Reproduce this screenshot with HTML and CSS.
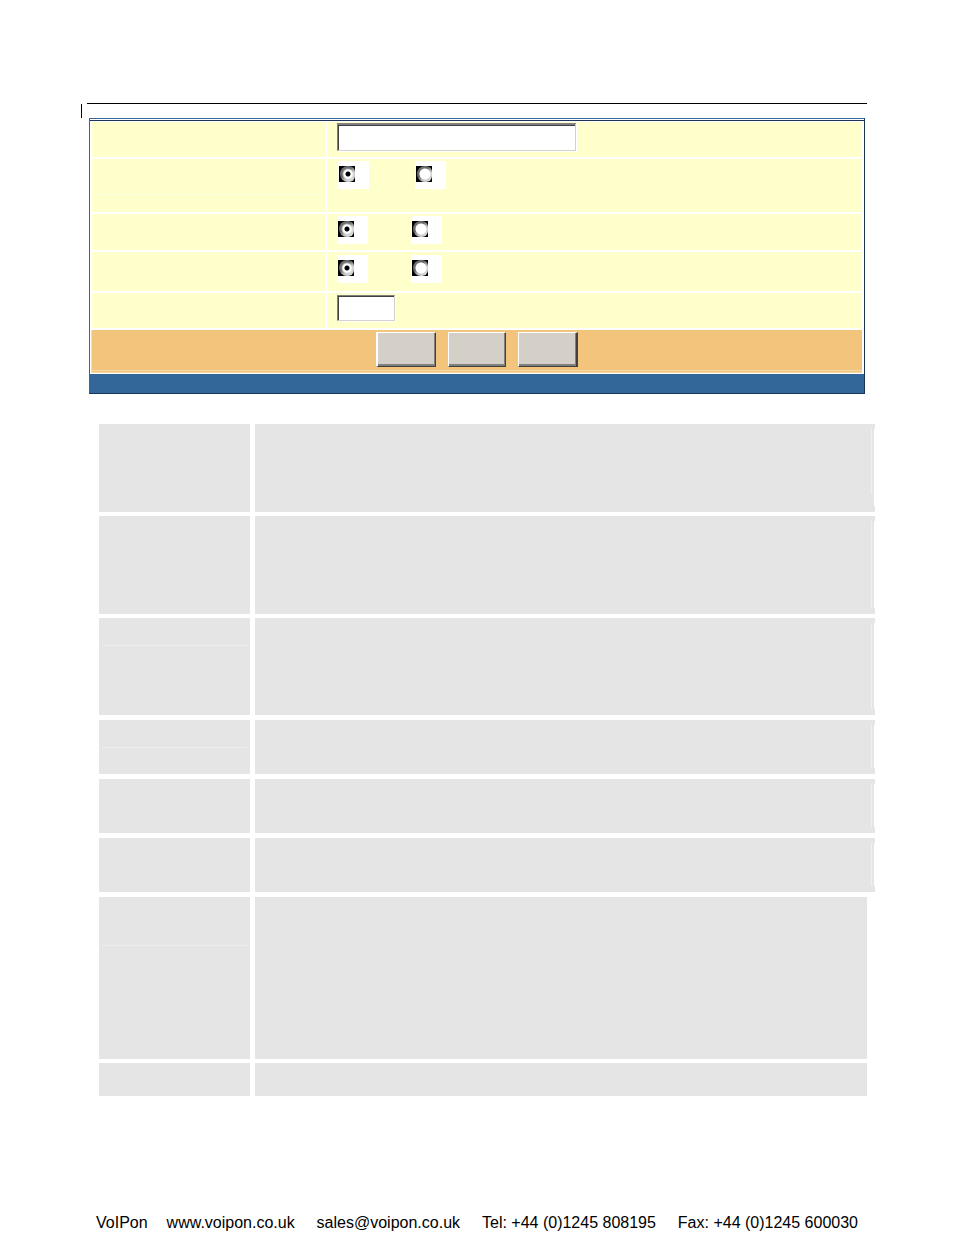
FILE: index.html
```html
<!DOCTYPE html>
<html lang="en">
<head>
<meta charset="utf-8">
<title>VoIPon</title>
<link rel="stylesheet" href="styles.css">
</head>
<body>
<header class="page-head"><div class="change-bar"></div></header>
<main>
<form class="panel">
  <div class="rows">
    <div class="row row-first"><div class="name"></div><div class="field"><input class="text" type="text" aria-label="Value"></div></div>
    <div class="row row-tall"><div class="name name-lined"></div><div class="field field-wide">
      <label class="choice"><input type="radio" name="a" aria-label="First option" checked></label>
      <label class="choice"><input type="radio" name="a" aria-label="Second option"></label></div></div>
    <div class="row row-mid"><div class="name"></div><div class="field">
      <label class="choice"><input type="radio" name="b" aria-label="First option" checked></label>
      <label class="choice"><input type="radio" name="b" aria-label="Second option"></label></div></div>
    <div class="row row-low"><div class="name"></div><div class="field">
      <label class="choice"><input type="radio" name="c" aria-label="First option" checked></label>
      <label class="choice"><input type="radio" name="c" aria-label="Second option"></label></div></div>
    <div class="row row-last"><div class="name"></div><div class="field"><input class="text text-small" type="text" aria-label="Number"></div></div>
  </div>
  <div class="actions">
    <button class="btn btn-first" type="button" aria-label="Update"></button>
    <button class="btn" type="button" aria-label="Cancel"></button>
    <button class="btn btn-final" type="button" aria-label="Reboot"></button>
  </div>
  <div class="panel-foot"></div>
</form>
<table class="info">
  <tr class="h-92"><td class="term"></td><td class="text-cell text-cell-short"></td></tr>
  <tr class="h-102"><td class="term"></td><td class="text-cell"></td></tr>
  <tr class="h-102 gap-5"><td class="term lined"></td><td class="text-cell"></td></tr>
  <tr class="h-59 gap-5"><td class="term lined"></td><td class="text-cell"></td></tr>
  <tr class="h-59 gap-5"><td class="term"></td><td class="text-cell"></td></tr>
  <tr class="h-59 gap-5"><td class="term"></td><td class="text-cell"></td></tr>
</table>
<table class="info info-narrow">
  <tr class="h-166"><td class="term lined lined-low"></td><td></td></tr>
  <tr class="h-37"><td class="term"></td><td></td></tr>
</table>
</main>
<footer class="page-foot">
  <div class="brand"><span>VoIPon</span><a href="#">www.voipon.co.uk</a></div>
  <a href="#">sales@voipon.co.uk</a>
  <span>Tel: +44 (0)1245 808195</span>
  <span>Fax: +44 (0)1245 600030</span>
</footer>
</body>
</html>
```
FILE: styles.css
```css
* { box-sizing: border-box; }
body {
  margin: 0;
  background: #fff;
  color: #000;
  font: 16px/18px "Liberation Sans", Arial, sans-serif;
}
.page-head {
  margin: 0 87px 0 81px;
  padding-top: 103px;
}
.page-head::before {
  content: "";
  display: block;
  height: 1px;
  margin-left: 6px;
  background: #000;
}
.change-bar { width: 1px; height: 14px; background: #000; }

.panel {
  margin: 0 89px;
  border: 1px solid #336699;
  border-right-color: #1a3557;
  border-bottom-color: #1a3557;
}
.rows {
  margin-top: 1px;
  padding: 1px 2px 0;
  border-top: 1px solid #1a3557;
}
.row { display: grid; grid-template-columns: 234px 1fr; gap: 1px; margin-bottom: 2px; }
.name, .field { background: #ffffcc; }
.field { display: flex; align-items: flex-start; gap: 43px; padding: 2px 10px 0; }
.field-wide { gap: 46px; padding: 2px 11px 0; }
.row-first { height: 35px; }
.row-first .field { padding-top: 1px; }
.row-tall { height: 53px; }
.row-mid { height: 36px; }
.row-low { height: 39px; }
.row-low .field { padding-top: 3px; }
.row-last { height: 35px; }
.name-lined::before {
  content: "";
  display: block;
  height: 1px;
  margin: 35px 2px 0;
  background: #ffffde;
}
.text {
  width: 239px;
  height: 28px;
  padding: 0 4px;
  border: 1px solid #d4d0c8;
  border-top: 2px solid #808080;
  border-left-color: #808080;
  border-radius: 0;
  background: #fff;
  box-shadow: inset 1px 1px #404040, 1px 1px #fff;
  font: inherit;
}
.text-small { width: 58px; height: 26px; border-top-width: 1px; }
.choice { width: 31px; height: 28px; padding: 5px 1px; background: #fff; }
.choice input {
  display: block;
  appearance: none;
  width: 16px;
  height: 16px;
  margin: 0;
  padding: 0 0 0 1px;
  background: #000;
}
.choice input::before {
  content: "";
  display: block;
  width: 15px;
  height: 16px;
  border-radius: 8px 6px 6px 8px;
  background: radial-gradient(circle at 8px 8px, #fff 5px, transparent 6px), linear-gradient(135deg, #777 10%, #666 40%, #ccc 65%, #ddd);
}
.choice input:checked::before {
  background: radial-gradient(circle at 8px 8px, #000 2px, #fff 3px, #fff 4px, transparent 6px), linear-gradient(135deg, #777 10%, #666 40%, #ccc 65%, #ddd);
}
.actions {
  display: flex;
  justify-content: center;
  gap: 12px;
  height: 43px;
  margin: 0 2px 1px 1px;
  padding-top: 2px;
  border-left: 1px solid #f8dcb0;
  background: linear-gradient(#f7d9a8, #f7d9a8) 0 40px / 100% 1px no-repeat, linear-gradient(#f7d9a8, #f7d9a8) 0 42px / 100% 1px no-repeat, #f3c47c;
}
.btn {
  width: 58px;
  height: 35px;
  padding: 0;
  border: 1px solid #fff;
  border-right-color: #404040;
  border-bottom-color: #404040;
  border-radius: 0;
  background: #d4d0c8;
  box-shadow: inset -1px -2px #808080;
}
.btn-first { width: 60px; border-left-width: 2px; }
.btn-final { width: 60px; border-right-width: 2px; }
.panel-foot { height: 19px; background: #336699; }

.info {
  width: calc(100% - 178px);
  margin: 30px 79px 0 99px;
  border-collapse: separate;
  border-spacing: 0;
  table-layout: fixed;
}
.info-narrow { width: calc(100% - 186px); margin-top: 0; margin-right: 87px; }
.info td {
  position: relative;
  padding: 0;
  border-bottom: 4px solid #fff;
  background: #e5e5e5;
  vertical-align: top;
}
.info .gap-5 td { border-bottom-width: 5px; }
.info .term { width: 156px; border-right: 5px solid #fff; }
.h-92 { height: 92px; }
.h-102 { height: 102px; }
.h-59 { height: 59px; }
.h-166 { height: 166px; }
.h-37 { height: 37px; }
.lined::before {
  content: "";
  display: block;
  height: 1px;
  margin: 27px 3px 0;
  background: #eee;
}
.lined-low::before { margin-top: 48px; }
.text-cell::before, .text-cell::after {
  content: "";
  position: absolute;
  top: 5px;
  bottom: 6px;
  width: 1px;
}
.text-cell::before { right: 3px; background: #f0f0f0; }
.text-cell::after { right: 0; background: #fff; }
.text-cell-short::before { bottom: 18px; }

.page-foot {
  display: flex;
  justify-content: space-between;
  margin: 114px 96px 0;
  padding-bottom: 3px;
  white-space: nowrap;
}
.brand { display: flex; gap: 19px; }
.page-foot a { color: inherit; text-decoration: none; }
```
